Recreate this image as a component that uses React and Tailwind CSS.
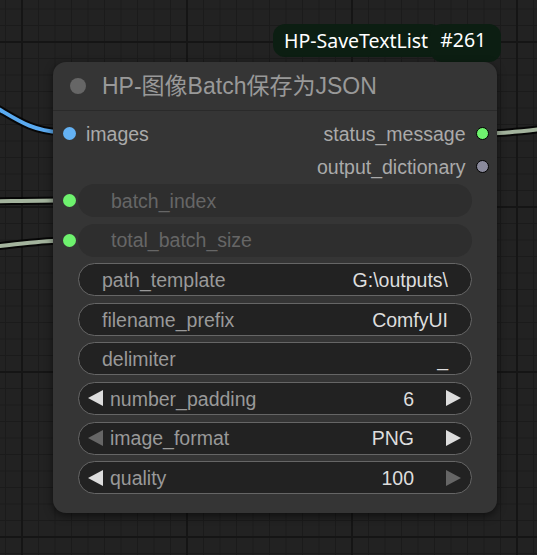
import React from "react";

const FONT = "font-['Liberation_Sans','Noto_Sans_CJK_SC',Arial,sans-serif]";

const Arrow = ({ dir, dim }) => (
  <svg width="15" height="16" viewBox="0 0 15 16" className="shrink-0">
    <polygon
      points={dir === "left" ? "15,0 15,16 0,8" : "0,0 0,16 15,8"}
      fill={dim ? "#666666" : "#dddddd"}
    />
  </svg>
);

const widgets = [
  { name: "batch_index", kind: "input" },
  { name: "total_batch_size", kind: "input" },
  { name: "path_template", kind: "text", value: "G:\\outputs\\" },
  { name: "filename_prefix", kind: "text", value: "ComfyUI" },
  { name: "delimiter", kind: "text", value: "_" },
  { name: "number_padding", kind: "num", value: "6" },
  { name: "image_format", kind: "num", value: "PNG", dimLeft: true },
  { name: "quality", kind: "num", value: "100", dimRight: true },
];

const Widget = ({ w }) => {
  if (w.kind === "input") {
    return (
      <div className="relative h-[33px] mx-[25px]">
        {/* converted input slot */}
        <span className="absolute left-[-15.5px] top-[10px] w-[13px] h-[13px] rounded-full bg-[#6ef26e]" />
        <div className="h-full rounded-full bg-[#2e2e2e] flex items-center pl-[33px] pt-[2px] text-[#666666]">
          {w.name}
        </div>
      </div>
    );
  }
  if (w.kind === "text") {
    return (
      <div className="h-[33px] mx-[25px] rounded-full bg-[#222222] border border-[#666666] flex items-center justify-between pl-[23px] pr-[23px] pt-[2px]">
        <span className="text-[#999999]">{w.name}</span>
        <span className="text-[#dddddd]">{w.value}</span>
      </div>
    );
  }
  return (
    <div className="h-[33px] mx-[25px] rounded-full bg-[#222222] border border-[#666666] flex items-center pl-[9px] pr-[10px]">
      <Arrow dir="left" dim={w.dimLeft} />
      <span className="ml-[7px] pt-[2px] text-[#999999]">{w.name}</span>
      <span className="ml-auto pt-[2px] text-[#dddddd]">{w.value}</span>
      <span className="ml-[32px]">
        <Arrow dir="right" dim={w.dimRight} />
      </span>
    </div>
  );
};

export default function App() {
  return (
    <div
      className={`relative w-[537px] h-[555px] overflow-hidden ${FONT} text-[19.5px] leading-none bg-[#222222] bg-[linear-gradient(to_right,#151515_2px,transparent_2px),linear-gradient(to_bottom,#151515_2px,transparent_2px),linear-gradient(to_right,#1b1b1b_1px,transparent_1px),linear-gradient(to_bottom,#1b1b1b_1px,transparent_1px)] bg-[size:165px_165px,165px_165px,16.5px_16.5px,16.5px_16.5px] bg-[position:21px_41px,21px_41px,5px_8.5px,5px_8.5px]`}
    >
      {/* links */}
      <svg className="absolute inset-0" width="537" height="555">
        <g fill="none" strokeLinecap="round">
          <path d="M -10 104 C 15 118, 30 131, 60 132" stroke="#000" strokeOpacity="0.8" strokeWidth="8" />
          <path d="M -10 104 C 15 118, 30 131, 60 132" stroke="#5aaaf0" strokeWidth="4" />
          <path d="M -10 201.5 C 20 201, 40 200.5, 60 200.5" stroke="#000" strokeOpacity="0.8" strokeWidth="8" />
          <path d="M -10 201.5 C 20 201, 40 200.5, 60 200.5" stroke="#a3b39d" strokeWidth="4" />
          <path d="M -10 247 C 20 244, 40 241, 60 240.5" stroke="#000" strokeOpacity="0.8" strokeWidth="8" />
          <path d="M -10 247 C 20 244, 40 241, 60 240.5" stroke="#a3b39d" strokeWidth="4" />
          <path d="M 490 133.5 C 510 133, 525 131, 550 128" stroke="#000" strokeOpacity="0.8" strokeWidth="8" />
          <path d="M 490 133.5 C 510 133, 525 131, 550 128" stroke="#a3b39d" strokeWidth="4" />
        </g>
      </svg>

      {/* badge */}
      <div className="absolute left-[273px] top-[24px] flex items-start text-white font-['Noto_Sans',sans-serif] text-[19.5px]">
        <span className="h-[33px] pl-[11px] pr-[14px] rounded-[12px] bg-[#0c1e12] flex items-center">
          HP-SaveTextList
        </span>
        <span className="-ml-[12px] h-[38px] pl-[10px] pr-[15px] rounded-[12px] bg-[#0c1e12] flex items-start pt-[6px]">
          #261
        </span>
      </div>

      {/* node */}
      <div className="absolute left-[53px] top-[62px] w-[444px] h-[451px] rounded-[13px] bg-[#353535] shadow-[0_3px_8px_rgba(0,0,0,0.55)] flex flex-col">
        <div className="h-[49px] flex items-center pl-[17px] border-b border-[#2a2a2a]">
          <span className="w-[16px] h-[16px] rounded-full bg-[#666666]" />
          <span className="ml-[16px] text-[23px] text-[#999999]">HP-图像Batch保存为JSON</span>
        </div>

        <div className="flex pt-[6px]">
          <div className="flex flex-col">
            <div className="h-[33px] flex items-center pl-[9.5px]">
              <span className="w-[13px] h-[13px] rounded-full bg-[#64b2f4]" />
              <span className="ml-[10.5px] pt-[2px] text-[#aaaaaa]">images</span>
            </div>
          </div>
          <div className="ml-auto flex flex-col items-end pr-[8.5px]">
            <div className="h-[33px] flex items-center">
              <span className="pt-[2px] text-[#aaaaaa]">status_message</span>
              <span className="ml-[10px] w-[13px] h-[13px] rounded-full bg-[#6ef26e] border-[1.5px] border-black" />
            </div>
            <div className="h-[33px] flex items-center">
              <span className="pt-[2px] text-[#aaaaaa]">output_dictionary</span>
              <span className="ml-[10px] w-[13px] h-[13px] rounded-full bg-[#8a8a9c] border-[1.5px] border-black" />
            </div>
          </div>
        </div>

        <div className="mt-[1px] flex flex-col gap-[6.6px]">
          {widgets.map((w) => (
            <Widget key={w.name} w={w} />
          ))}
        </div>
      </div>
    </div>
  );
}
